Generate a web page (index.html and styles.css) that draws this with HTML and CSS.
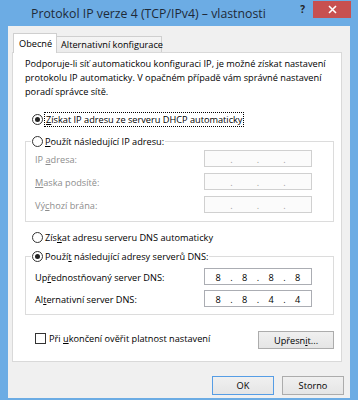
FILE: index.html
```html
<!DOCTYPE html>
<html lang="cs">
<head>
<meta charset="utf-8">
<title>Protokol IP verze 4 (TCP/IPv4) – vlastnosti</title>
<link rel="stylesheet" href="styles.css">
</head>
<body>
<div class="window">
  <div class="titlebar">
    <span class="title">Protokol IP verze 4 (TCP/IPv4) – vlastnosti</span>
    <span class="help">?</span>
    <span class="close">
      <svg width="9" height="9" viewBox="0 0 9 9"><path d="M1 1 L8 8 M8 1 L1 8" stroke="#fff" stroke-width="1.6"/></svg>
    </span>
  </div>
  <div class="client">
    <div class="tabs">
      <div class="tab active">Obecné</div>
      <div class="tab">Alternativní konfigurace</div>
    </div>
    <div class="panel">
      <p class="intro">Podporuje-li síť automatickou konfiguraci IP, je možné získat nastavení<br>protokolu IP automaticky. V opačném případě vám správné nastavení<br>poradí správce sítě.</p>

      <div class="opt first">
        <span class="radio checked"></span>
        <span class="focus"><u>Z</u>ískat IP adresu ze serveru DHCP automaticky</span>
      </div>

      <div class="group g1">
        <div class="opt legend">
          <span class="radio"></span>
          <span><u>P</u>oužít následující IP adresu:</span>
        </div>
        <div class="fields f1">
          <div class="row">
            <span class="lbl disabled">IP <u>a</u>dresa:</span>
            <span class="ip off"><i></i><b>.</b><i></i><b>.</b><i></i><b>.</b><i></i></span>
          </div>
          <div class="row">
            <span class="lbl disabled"><u>M</u>aska podsítě:</span>
            <span class="ip off"><i></i><b>.</b><i></i><b>.</b><i></i><b>.</b><i></i></span>
          </div>
          <div class="row">
            <span class="lbl disabled">Vý<u>c</u>hozí brána:</span>
            <span class="ip off"><i></i><b>.</b><i></i><b>.</b><i></i><b>.</b><i></i></span>
          </div>
        </div>
      </div>

      <div class="opt dns1">
        <span class="radio"></span>
        <span>Zís<u>k</u>at adresu serveru DNS automaticky</span>
      </div>

      <div class="group g2">
        <div class="opt legend">
          <span class="radio checked"></span>
          <span>Použí<u>t</u> následující adresy serverů DNS:</span>
        </div>
        <div class="fields f2">
          <div class="row">
            <span class="lbl">Up<u>ř</u>ednostňovaný server DNS:</span>
            <span class="ip"><i>8</i><b>.</b><i>8</i><b>.</b><i>8</i><b>.</b><i>8</i></span>
          </div>
          <div class="row">
            <span class="lbl">Al<u>t</u>ernativní server DNS:</span>
            <span class="ip"><i>8</i><b>.</b><i>8</i><b>.</b><i>4</i><b>.</b><i>4</i></span>
          </div>
        </div>
      </div>

      <div class="bottom">
        <div class="check-row">
          <span class="check"></span>
          <span>Při <u>u</u>končení ověřit platnost nastavení</span>
        </div>
        <span class="btn adv">Upřesn<u>i</u>t...</span>
      </div>
    </div>
    <div class="footer">
      <span class="btn default">OK</span>
      <span class="btn">Storno</span>
    </div>
  </div>
</div>
</body>
</html>
```

FILE: styles.css
```css
* { box-sizing: border-box; }
body { margin: 0; }

.window {
  width: 358px;
  height: 400px;
  background: #6cace4;
  display: flex;
  flex-direction: column;
  font-family: "Open Sans", sans-serif;
  font-size: 9.2px;
  color: #000;
}

.titlebar {
  height: 26px;
  display: flex;
  align-items: flex-start;
  flex: none;
}
.title {
  flex: 1;
  margin: 5px 0 0 31px;
  font-size: 12.3px;
  line-height: 17px;
  color: #1e2a38;
  white-space: nowrap;
}
.help {
  margin: 4px 8px 0 0;
  font-size: 10px;
  line-height: 11px;
  font-weight: bold;
  color: #222;
}
.close {
  width: 38px;
  height: 17px;
  margin: 1px 7px 0 0;
  background: #c75050;
  display: flex;
  align-items: center;
  justify-content: center;
}
.close svg { display: block; }

.client {
  margin: 0 8px;
  height: 372px;
  background: #f0f0f0;
  padding: 7px 0 0 4px;
  display: flex;
  flex-direction: column;
}

.tabs {
  display: flex;
  align-items: flex-end;
  height: 19px;
  padding-left: 1px;
}
.tab {
  height: 16px;
  line-height: 15px;
  padding: 0 4px;
  border: 1px solid #cfcfcf;
  border-bottom: none;
  border-left: none;
  background: linear-gradient(#f4f4f4, #ececec);
  white-space: nowrap;
  width: 105px;
}
.tab.active {
  position: relative;
  z-index: 1;
  width: 44px;
  height: 20px;
  line-height: 19px;
  margin-bottom: -1px;
  padding: 0 5px;
  border-left: 1px solid #cfcfcf;
  background: #fff;
}

.panel {
  width: 330px;
  height: 310px;
  border: 1px solid #d9d9d9;
  background: #fff;
  padding: 4px 8px 0 12px;
  display: flex;
  flex-direction: column;
}

.intro {
  margin: 0;
  line-height: 14px;
  white-space: nowrap;
}

.opt {
  display: flex;
  align-items: center;
  gap: 2px;
  height: 14px;
  margin-left: 7px;
  white-space: nowrap;
}
.opt.first { margin-top: 13px; }
.opt.dns1 { margin-top: 8px; }

.radio {
  width: 11px;
  height: 11px;
  border: 1px solid #333;
  border-radius: 50%;
  background: #fff;
  display: flex;
  align-items: center;
  justify-content: center;
  flex: none;
}
.radio.checked::after {
  content: "";
  width: 5px;
  height: 5px;
  border-radius: 50%;
  background: #222;
}

.focus {
  outline: 1px dotted #000;
  outline-offset: 0;
  padding: 0 1px;
  line-height: 13px;
}

.group {
  width: 309px;
  border: 1px solid #dcdcdc;
  display: flex;
  flex-direction: column;
}
.g1 { margin-top: 15px; }
.g2 { margin-top: 12px; }

.legend {
  align-self: flex-start;
  margin: -8px 0 0 5px;
  padding: 0 1px;
  background: #fff;
}

.fields {
  display: flex;
  flex-direction: column;
  padding: 0 21px 0 9px;
}
.f1 { margin-top: 2px; gap: 6px; padding-bottom: 8px; }
.f2 { margin-top: 5px; gap: 5px; padding-bottom: 7px; }

.row {
  display: flex;
  align-items: center;
  justify-content: space-between;
  height: 17px;
}
.lbl { padding-top: 2px; white-space: nowrap; }
.lbl.disabled { color: #8d8d8d; }

.ip {
  width: 108px;
  height: 17px;
  border: 1px solid #abadb3;
  background: #fff;
  display: flex;
  align-items: center;
  padding-top: 1px;
}
.ip i {
  flex: 1;
  font-style: normal;
  text-align: center;
}
.ip b {
  width: 0;
  font-weight: normal;
  display: flex;
  justify-content: center;
}
.ip.off {
  border-color: #d0d0d0;
  background: #fbfbfb;
  color: #a0a0a0;
}

.bottom {
  width: 309px;
  margin-top: 15px;
  display: flex;
  justify-content: space-between;
  align-items: flex-start;
}
.check-row {
  display: flex;
  align-items: center;
  gap: 3px;
  height: 14px;
  margin: 1px 0 0 10px;
  white-space: nowrap;
}
.check {
  width: 11px;
  height: 11px;
  border: 1px solid #333;
  background: #fff;
  flex: none;
}

.btn {
  display: flex;
  align-items: center;
  justify-content: center;
  height: 19px;
  width: 62px;
  border: 1px solid #acacac;
  background: linear-gradient(#f0f0f0, #e5e5e5);
  white-space: nowrap;
}
.btn.adv {
  width: 76px;
  height: 18px;
  margin-top: 1px;
}
.btn.default { border-color: #569de5; }

.footer {
  display: flex;
  justify-content: flex-end;
  gap: 8px;
  margin-top: 14px;
  padding-right: 6px;
}
```
